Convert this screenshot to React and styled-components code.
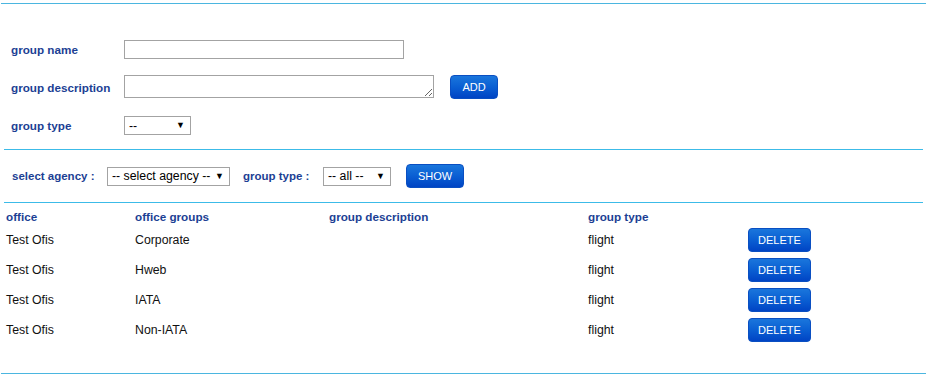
import React from 'react';
import styled, { createGlobalStyle } from 'styled-components';

const GlobalStyle = createGlobalStyle`
  body {
    margin: 0;
    background: #fff;
    font-family: 'Liberation Sans', Arial, sans-serif;
  }
`;

const rows = [
  { office: 'Test Ofis', group: 'Corporate', description: '', type: 'flight' },
  { office: 'Test Ofis', group: 'Hweb', description: '', type: 'flight' },
  { office: 'Test Ofis', group: 'IATA', description: '', type: 'flight' },
  { office: 'Test Ofis', group: 'Non-IATA', description: '', type: 'flight' },
];

const App = () => (
  <>
    <GlobalStyle />
    <Page>
      <FormSection>
        <FormRow>
          <Label>group name</Label>
          <TextInput type="text" />
        </FormRow>
        <FormRow $top>
          <Label>group description</Label>
          <TextArea />
          <ActionButton $width={48} $left={16}>ADD</ActionButton>
        </FormRow>
        <FormRow $extra={1}>
          <Label>group type</Label>
          <SelectBox $width={67}>
            <span>--</span>
            <Arrow>▼</Arrow>
          </SelectBox>
        </FormRow>
      </FormSection>

      <FilterBar>
        <FilterLabel $width={95}>select agency :</FilterLabel>
        <SelectBox $width={123}>
          <span>-- select agency --</span>
          <Arrow>▼</Arrow>
        </SelectBox>
        <FilterLabel $width={80} $left={13}>group type :</FilterLabel>
        <SelectBox $width={68}>
          <span>-- all --</span>
          <Arrow>▼</Arrow>
        </SelectBox>
        <ActionButton $width={58} $left={15}>SHOW</ActionButton>
      </FilterBar>

      <Table>
        <thead>
          <tr>
            <Th $width={129}>office</Th>
            <Th $width={194}>office groups</Th>
            <Th $width={259}>group description</Th>
            <Th $width={164}>group type</Th>
            <Th $width={80} />
          </tr>
        </thead>
        <tbody>
          {rows.map((row) => (
            <tr key={row.group}>
              <Td>{row.office}</Td>
              <Td>{row.group}</Td>
              <Td>{row.description}</Td>
              <Td>{row.type}</Td>
              <Td $flush>
                <ActionButton $width={63}>DELETE</ActionButton>
              </Td>
            </tr>
          ))}
        </tbody>
      </Table>
    </Page>
  </>
);

export default App;

const Page = styled.div`
  margin: 3px 3px 0 1px;
  border-top: 1px solid #4bb6e0;
  border-bottom: 1px solid #4bb6e0;
`;

const FormSection = styled.div`
  display: flex;
  flex-direction: column;
  gap: 16px;
  padding: 36px 0 14px 7px;
  margin: 0 3px 0 3px;
  border-bottom: 1px solid #3cbbe8;
`;

const FormRow = styled.div`
  display: flex;
  align-items: ${(props) => (props.$top ? 'flex-start' : 'center')};
  margin-top: ${(props) => props.$extra || 0}px;

  & > label {
    align-self: center;
  }
`;

const Label = styled.label`
  width: 113px;
  flex-shrink: 0;
  font-size: 11.7px;
  font-weight: bold;
  color: #1c3f94;
`;

const TextInput = styled.input`
  box-sizing: border-box;
  width: 280px;
  height: 19px;
  margin: 0;
  border: 1px solid #a3a3a3;
  padding: 1px 3px;
  font: 12px 'Liberation Sans', Arial, sans-serif;
  outline: none;
`;

const TextArea = styled.textarea`
  box-sizing: border-box;
  width: 310px;
  height: 23px;
  margin: 0;
  border: 1px solid #a3a3a3;
  padding: 1px 3px;
  font: 12px 'Liberation Sans', Arial, sans-serif;
  resize: both;
  outline: none;
`;

const SelectBox = styled.div`
  box-sizing: border-box;
  width: ${(props) => props.$width}px;
  height: 19px;
  display: flex;
  align-items: center;
  justify-content: space-between;
  padding: 0 5px 0 4px;
  border: 1px solid #a3a3a3;
  background: #fff;
  font-size: 12.3px;
  color: #000;
`;

const Arrow = styled.span`
  font-size: 9px;
  line-height: 1;
`;

const ActionButton = styled.button`
  box-sizing: border-box;
  width: ${(props) => props.$width}px;
  height: 24px;
  margin: 0 0 0 ${(props) => props.$left || 0}px;
  padding: 0;
  border: 1px solid #0a4fc2;
  border-radius: 4px;
  background: linear-gradient(to bottom, #1a76dc 0%, #0a5fd3 50%, #0044c4 100%);
  color: #fff;
  font: 11px 'Liberation Sans', Arial, sans-serif;
  text-transform: uppercase;
  cursor: pointer;
`;

const FilterBar = styled.div`
  display: flex;
  align-items: center;
  height: 52px;
  padding-left: 8px;
  margin: 0 3px 0 3px;
  border-bottom: 1px solid #3cbbe8;
`;

const FilterLabel = styled.span`
  font-size: 11.5px;
  font-weight: bold;
  color: #1c3f94;
  width: ${(props) => props.$width}px;
  margin-left: ${(props) => props.$left || 0}px;
  flex-shrink: 0;
`;

const Table = styled.table`
  border-collapse: collapse;
  table-layout: fixed;
  width: 826px;
  margin: 0 0 28px 1px;
  font-size: 12.3px;
`;

const Th = styled.th`
  box-sizing: border-box;
  width: ${(props) => props.$width}px;
  height: 22px;
  padding: 5px 0 0 4px;
  text-align: left;
  font-size: 11.7px;
  font-weight: bold;
  color: #1c3f94;
`;

const Td = styled.td`
  box-sizing: border-box;
  height: 30px;
  padding: 0 0 0 ${(props) => (props.$flush ? 0 : 4)}px;
  color: #111;
`;
